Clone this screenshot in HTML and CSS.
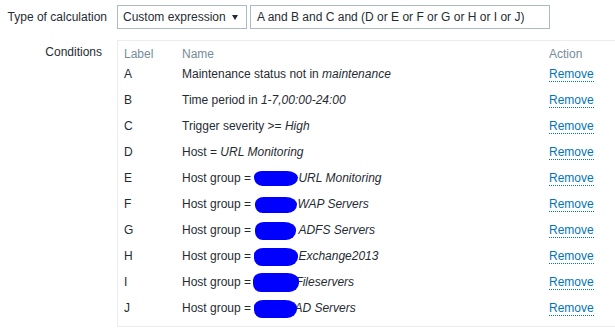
FILE: index.html
```html
<!DOCTYPE html>
<html>
<head>
<meta charset="utf-8">
<link rel="stylesheet" href="styles.css">
</head>
<body>
<div class="form">
  <div class="label label-top">Type of calculation</div>
  <div class="field calc">
    <div class="select"><span class="select-text">Custom expression</span><span class="arrow"></span></div>
    <div class="input">A and B and C and (D or E or F or G or H or I or J)</div>
  </div>
  <div class="label label-cond">Conditions</div>
  <div class="field">
    <div class="box">
      <table class="cond">
        <colgroup><col class="c-label"><col class="c-name"><col class="c-action"></colgroup>
        <thead>
          <tr><th>Label</th><th>Name</th><th>Action</th></tr>
        </thead>
        <tbody>
          <tr><td>A</td><td>Maintenance status not in <i>maintenance</i></td><td><a class="rm">Remove</a></td></tr>
          <tr><td>B</td><td>Time period in <i>1-7,00:00-24:00</i></td><td><a class="rm">Remove</a></td></tr>
          <tr><td>C</td><td>Trigger severity &gt;= <i>High</i></td><td><a class="rm">Remove</a></td></tr>
          <tr><td>D</td><td>Host = <i>URL Monitoring</i></td><td><a class="rm">Remove</a></td></tr>
          <tr><td>E</td><td>Host group = <span class="blob b1"></span><i>URL Monitoring</i></td><td><a class="rm">Remove</a></td></tr>
          <tr><td>F</td><td>Host group = <span class="blob b2"></span><i>WAP Servers</i></td><td><a class="rm">Remove</a></td></tr>
          <tr><td>G</td><td>Host group = <span class="blob b3"></span><i>ADFS Servers</i></td><td><a class="rm">Remove</a></td></tr>
          <tr><td>H</td><td>Host group = <span class="blob b4"></span><i>Exchange2013</i></td><td><a class="rm">Remove</a></td></tr>
          <tr><td>I</td><td>Host group = <span class="blob b5 over"></span><i>Fileservers</i></td><td><a class="rm">Remove</a></td></tr>
          <tr><td>J</td><td>Host group = <span class="blob b6 over"></span><i>AD Servers</i></td><td><a class="rm">Remove</a></td></tr>
        </tbody>
      </table>
    </div>
  </div>
</div>
</body>
</html>
```

FILE: styles.css
```css
html, body {
  margin: 0;
  padding: 0;
  background: #ffffff;
  overflow: hidden;
}
body {
  font-family: "Liberation Sans", Arial, sans-serif;
  font-size: 12px;
  line-height: 14px;
  color: #1f2c33;
}
.form {
  display: grid;
  grid-template-columns: 107px 1fr;
  column-gap: 10px;
  row-gap: 11px;
  padding-top: 5px;
}
.label {
  text-align: right;
  white-space: nowrap;
}
.label-top {
  line-height: 24px;
}
.label-cond {
  padding-top: 5px;
  padding-right: 5px;
}
.calc {
  display: flex;
  gap: 3px;
}
.select {
  box-sizing: border-box;
  width: 130px;
  height: 24px;
  border: 1px solid #acbbc2;
  display: flex;
  align-items: center;
  justify-content: space-between;
  padding: 0 8px 0 5px;
}
.arrow {
  width: 0;
  height: 0;
  border-left: 3px solid transparent;
  border-right: 3px solid transparent;
  border-top: 5px solid #1f2c33;
  margin-top: 1px;
}
.input {
  box-sizing: border-box;
  width: 300px;
  height: 24px;
  border: 1px solid #acbbc2;
  padding: 0 6px;
  line-height: 22px;
  white-space: nowrap;
}
.box {
  box-sizing: border-box;
  width: 520px;
  border: 1px solid #ebeef0;
  padding: 6px 0 5px 1px;
}
.cond {
  border-collapse: collapse;
  table-layout: fixed;
  width: 100%;
}
.c-label { width: 58px; }
.c-name { width: 367px; }
.cond th {
  text-align: left;
  font-weight: normal;
  color: #768d99;
  padding: 0 5px 0;
}
.cond td {
  padding: 6px 5px;
  white-space: nowrap;
}
.rm {
  color: #0275b8;
  text-decoration: none;
  border-bottom: 1px dotted #0275b8;
  cursor: pointer;
}
.blob {
  display: inline-block;
  vertical-align: middle;
  height: 16px;
  width: 44px;
  margin: -3px 0 -3px 0;
  background: #0000ff;
  border-radius: 9px 12px 10px 8px / 7px 8px 9px 8px;
}
.over {
  position: relative;
  z-index: 1;
}
.b1 { width: 44px; height: 15px; border-radius: 8px 12px 11px 9px / 6px 7px 9px 9px; }
.b2 { width: 42px; height: 16px; margin-left: 1px; }
.b3 { width: 41px; height: 18px; margin-left: 1px; margin-right: 2px; }
.b4 { width: 44px; height: 18px; }
.b5 { width: 46px; height: 19px; margin-right: -4px; margin-left: -1px; }
.b6 { width: 43px; height: 18px; margin-right: -3px; }
```
